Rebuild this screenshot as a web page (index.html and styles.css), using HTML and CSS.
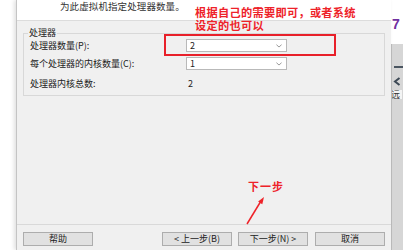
FILE: index.html
```html
<!DOCTYPE html>
<html lang="zh-CN">
  <head>
    <meta charset="UTF-8" />
    <title>新建虚拟机向导 - 处理器配置</title>
    <link rel="stylesheet" href="styles.css">
  </head>
  <body>
    <div class="screen">
      <div class="side-left"></div>
      <div class="dialog">
        <div class="dialog-header">为此虚拟机指定处理器数量。</div>
        <div class="dialog-body">
          <fieldset class="group">
            <legend>处理器</legend>
            <div class="form-grid">
              <label class="form-label">处理器数量(P):</label>
              <div class="select">
                <span>2</span>
                <svg class="chevron" viewBox="0 0 7 4"><path d="M0.5 0.5 L3.5 3.2 L6.5 0.5" /></svg>
              </div>
              <label class="form-label">每个处理器的内核数量(C):</label>
              <div class="select">
                <span>1</span>
                <svg class="chevron" viewBox="0 0 7 4"><path d="M0.5 0.5 L3.5 3.2 L6.5 0.5" /></svg>
              </div>
              <div class="form-label total">处理器内核总数:</div>
              <div class="total total-value">2</div>
            </div>
          </fieldset>
        </div>
        <div class="dialog-footer">
          <button class="button">帮助</button>
          <button class="button back">&lt;&nbsp;上一步(B)</button>
          <button class="button">下一步(N)&nbsp;&gt;</button>
          <button class="button cancel">取消</button>
        </div>
      </div>
      <div class="side-right">
        <div class="side-right-top"><span class="step-num">7</span></div>
        <div class="side-right-bottom">
          <span class="side-dash"></span>
          <svg class="side-arrow" viewBox="0 0 8 9" width="8" height="9">
            <path d="M6.5 1 L2 4.5 L6.5 8" />
          </svg>
          <span class="side-text">远</span>
        </div>
      </div>
    </div>

    <!-- annotations drawn over the screenshot -->
    <div class="note note-top">
      <div>根据自己的需要即可，或者系统</div>
      <div>设定的也可以</div>
    </div>
    <div class="highlight-box"></div>
    <div class="note note-next">下一步</div>
    <svg class="arrow" viewBox="0 0 30 35" width="30" height="35">
      <line x1="7" y1="29" x2="21" y2="6" />
      <polygon points="24,2 22.3,9.3 18.1,6.6" />
    </svg>
  </body>
</html>
```

FILE: styles.css
```css
body {
  margin: 0;
  padding: 0;
  width: 403px;
  height: 250px;
  overflow: hidden;
  position: relative;
  background-color: #ffffff;
  font-family: "Noto Sans CJK SC", "Liberation Sans", sans-serif;
  color: #222;
}

.screen {
  display: flex;
  height: 250px;
}

.side-left {
  width: 16px;
  background-color: #ffffff;
}

.dialog {
  width: 374px;
  display: flex;
  flex-direction: column;
  border-left: 1px solid #c4c4c4;
  box-shadow: -2px 0 4px rgba(0, 0, 0, 0.12);
  background-color: #f0f0f0;
  position: relative;
}

.dialog-header {
  height: 20px;
  padding-left: 43px;
  background-color: #ffffff;
  border-bottom: 1px solid #dcdcdc;
  font-size: 9.5px;
  line-height: 12px;
  letter-spacing: 0.1px;
  color: #333;
}

.dialog-body {
  flex: 1;
  padding: 6px 6px 0 6px;
}

.group {
  margin: 0;
  padding: 0 6px 5px 6px;
  border: 1px solid #d8d8d8;
  min-width: 0;
}

.group legend {
  margin-left: -2px;
  padding: 0 1px;
  font-size: 9px;
  line-height: 12px;
}

.form-grid {
  display: grid;
  grid-template-columns: 156px 101px;
  grid-template-rows: 13px 13px 15px;
  row-gap: 5px;
  font-size: 9px;
  line-height: 13px;
}

.form-label {
  white-space: nowrap;
}

.total {
  align-self: end;
}

.total-value {
  padding-left: 2px;
}

.select {
  box-sizing: border-box;
  height: 13px;
  display: flex;
  align-items: center;
  justify-content: space-between;
  padding: 0 4px 0 3px;
  background-color: #ffffff;
  border: 1px solid #b9b9b9;
  font-size: 9px;
  line-height: 11px;
}

.chevron {
  width: 6px;
  height: 4px;
  fill: none;
  stroke: #7a7a7a;
  stroke-width: 0.9;
}

.dialog-footer {
  height: 26px;
  box-sizing: border-box;
  border-top: 1px solid #d9d9d9;
  padding: 7px 6px 0 6px;
  display: flex;
  align-items: flex-start;
  gap: 6px;
}

.button {
  width: 70px;
  height: 14px;
  padding: 0;
  box-sizing: border-box;
  border: 1px solid #adadad;
  background-color: #e1e1e1;
  font-family: "Noto Sans CJK SC", "Liberation Sans", sans-serif;
  font-size: 9px;
  line-height: 12px;
  color: #222;
}

.back {
  margin-left: auto;
}

.cancel {
  margin-left: 1px;
}

.side-right {
  width: 12px;
  display: flex;
  flex-direction: column;
}

.side-right-top {
  height: 44px;
  background-color: #ffffff;
  padding-left: 1px;
}

.step-num {
  display: block;
  margin-top: 16px;
  font-family: "Liberation Sans", sans-serif;
  font-weight: bold;
  font-size: 14px;
  line-height: 16px;
  color: #7030a0;
}

.side-right-bottom {
  flex: 1;
  background-color: #d6d6d6;
  border-left: 1px solid #bcbcbc;
  display: flex;
  flex-direction: column;
  align-items: flex-start;
  padding-top: 22px;
  overflow: hidden;
}

.side-dash {
  width: 9px;
  height: 2px;
  margin-left: 2px;
  background-color: #4a5560;
}

.side-arrow {
  margin-top: 9px;
  margin-left: 1px;
  fill: none;
  stroke: #3d4955;
  stroke-width: 2;
}

.side-text {
  margin-top: 4px;
  margin-left: -3px;
  padding: 0 2px;
  background-color: #f4f4f4;
  font-size: 9px;
  line-height: 9px;
  color: #333;
}

.note {
  position: absolute;
  color: #ee2229;
  font-weight: bold;
  white-space: nowrap;
}

.note-top {
  left: 195px;
  top: 6px;
  display: flex;
  flex-direction: column;
  gap: 1px;
  font-size: 11.2px;
  line-height: 12px;
  letter-spacing: 0.3px;
}

.note-next {
  left: 248px;
  top: 180px;
  font-size: 11px;
  line-height: 13px;
  letter-spacing: 1px;
}

.highlight-box {
  position: absolute;
  left: 164px;
  top: 34px;
  width: 172px;
  height: 22px;
  box-sizing: border-box;
  border: 2px solid #e8202a;
}

.arrow {
  position: absolute;
  left: 240px;
  top: 195px;
}

.arrow line {
  stroke: #ee2229;
  stroke-width: 1.5;
}

.arrow polygon {
  fill: #ee2229;
}
```
